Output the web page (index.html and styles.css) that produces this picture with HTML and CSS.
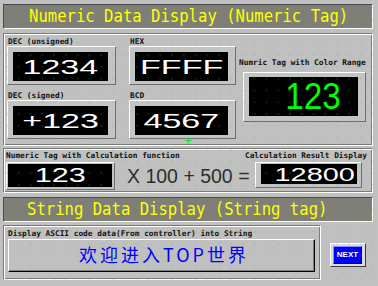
FILE: index.html
```html
<!DOCTYPE html>
<html>
<head>
<meta charset="utf-8">
<link rel="stylesheet" href="styles.css">
</head>
<body>
<div class="screen">
  <div class="title"><span class="title-text">Numeric Data Display (Numeric Tag)</span></div>
  <div class="panel numeric">
    <div class="col c1">
      <div class="lbl">DEC (unsigned)</div>
      <div class="frame"><div class="lcd"><span class="num">1234</span></div></div>
      <div class="lbl lbl2">DEC (signed)</div>
      <div class="frame"><div class="lcd"><span class="num">+123</span></div></div>
    </div>
    <div class="col c2">
      <div class="lbl">HEX</div>
      <div class="frame"><div class="lcd"><span class="num">FFFF</span></div></div>
      <div class="lbl lbl2">BCD</div>
      <div class="frame"><div class="lcd"><span class="num">4567</span></div></div>
    </div>
    <div class="col c3">
      <div class="lbl">Numric Tag with Color Range</div>
      <div class="frame big"><div class="lcd lcd-big"><span class="num green">123</span></div></div>
    </div>
  </div>
  <div class="panel calc">
    <div class="calc-labels"><span class="lbl">Numeric Tag with Calculation function</span><span class="lbl">Calculation Result Display</span></div>
    <div class="calc-row">
      <div class="frame thin"><div class="lcd"><span class="num sm">123</span></div></div>
      <div class="formula">X 100 + 500 =</div>
      <div class="frame thin result"><div class="lcd lcd-right"><span class="num sm res">12800</span></div></div>
    </div>
  </div>
  <div class="title t2"><span class="title-text">String Data Display (String tag)</span></div>
  <div class="bottom">
    <div class="panel string">
      <div class="lbl">Display ASCII code data(From controller) into String</div>
      <div class="strbox">欢迎进入TOP世界</div>
    </div>
    <div class="next"><div class="next-in">NEXT</div></div>
  </div>
  <span class="cursor">+</span>
  <div class="dots"></div>
</div>
</body>
</html>
```

FILE: styles.css
```css
* { box-sizing: border-box; }
html, body { margin: 0; padding: 0; }
body { background: #c0c0c0; width: 378px; height: 286px; overflow: hidden; }

.screen {
  position: relative;
  width: 378px;
  height: 286px;
  padding: 4px 5px 0 3px;
  display: flex;
  flex-direction: column;
}

.title {
  height: 25px;
  flex: none;
  background: #807f77;
  border: 1px solid;
  border-color: #4a4a4a #fff #fff #4a4a4a;
  padding-left: 25px;
  display: flex;
  align-items: center;
}
.title-text {
  font-family: "DejaVu Sans Mono", monospace;
  font-size: 15.6px;
  line-height: 1;
  color: #ffff00;
  display: inline-block;
  transform: scaleY(1.18);
  white-space: pre;
}
.t2 { margin-top: 4px; padding-left: 23px; }

.panel {
  flex: none;
  border: 1px solid;
  border-color: #7a7a7a #fff #fff #7a7a7a;
  box-shadow: inset 1px 1px 0 #fff, inset -1px -1px 0 #7a7a7a;
}

.lbl {
  font-family: "DejaVu Sans Mono", monospace;
  font-weight: bold;
  font-size: 7.8px;
  line-height: 9px;
  height: 9px;
  color: #111;
  white-space: pre;
}

/* numeric section */
.numeric {
  margin-top: 4px;
  height: 113px;
  display: flex;
  padding: 3px 0 0 3px;
}
.col { display: flex; flex-direction: column; }
.c1 { width: 109px; }
.c2 { width: 107px; margin-left: 13px; }
.c3 { width: 128px; margin-left: 3px; padding-top: 21px; }
.c1 .lbl, .c2 .lbl { margin-left: 1px; }
.lbl2 { margin-top: 6px; }

.frame {
  height: 39px;
  display: flex;
  border: 1px solid;
  border-color: #fff #6e6e6e #6e6e6e #fff;
  padding: 5px 7px 3px 5px;
  background: #c4c4c4;
}
.lcd {
  flex: 1;
  background: #000;
  display: flex;
  align-items: center;
  justify-content: center;
}
.num {
  font-family: "Liberation Sans", Arial, sans-serif;
  font-size: 21px;
  line-height: 1;
  color: #fff;
  display: inline-block;
  transform: scaleX(1.62);
  white-space: pre;
}

.big {
  width: 123px;
  height: 50px;
  margin-top: 5px;
  margin-left: 4px;
  padding: 4px 7px 5px 5px;
}
.lcd-big { justify-content: flex-end; padding-right: 17px; }
.green {
  color: #00ff00;
  font-size: 37px;
  transform: scaleX(0.9);
  transform-origin: right center;
}

/* calculation section */
.calc {
  margin-top: 2px;
  height: 45px;
  padding: 2px 5px 0 2px;
}
.calc-labels { display: flex; justify-content: space-between; }
.calc-row { display: flex; align-items: flex-start; margin-top: 2px; }
.thin {
  width: 109px;
  height: 28px;
  padding: 1px 2px 2px 1px;
}
.sm { font-size: 19.5px; transform: scaleX(1.57); }
.formula {
  margin-left: 12px;
  font-family: "Liberation Sans", Arial, sans-serif;
  font-size: 19.5px;
  line-height: 28px;
  color: #2e2e2e;
  white-space: pre;
}
.result {
  width: 107px;
  height: 26px;
  margin-left: auto;
  margin-right: 5px;
  padding: 1px 4px 3px 5px;
}
.lcd-right { justify-content: flex-end; padding-right: 2px; }
.lcd-right .num { transform-origin: right center; }
.res { font-size: 19px; transform: scaleX(1.52); }

/* string section */
.bottom { display: flex; align-items: flex-start; margin-top: 3px; }
.string {
  width: 318px;
  height: 55px;
  padding: 3px 5px 0 4px;
}
.strbox {
  margin-top: 1px;
  height: 33px;
  border: 1px solid;
  border-color: #fff #000 #000 #fff;
  box-shadow: inset -1px -1px 0 #808080;
  font-family: "Noto Sans CJK SC", "Liberation Sans", sans-serif;
  font-size: 18px;
  line-height: 29px;
  letter-spacing: 3px;
  padding-left: 5px;
  color: #0000ff;
  text-align: center;
}

.next {
  width: 36px;
  height: 24px;
  margin-left: 9px;
  margin-top: 18px;
  border: 1px solid;
  border-color: #fff #3a3a3a #3a3a3a #fff;
  background: #dcdcdc;
  padding: 2px 3px 2px 2px;
  display: flex;
}
.next-in {
  flex: 1;
  background: #0000ff;
  border: 1px solid;
  border-color: #8c8cff #00007a #00007a #8c8cff;
  display: flex;
  align-items: center;
  justify-content: center;
  color: #fff;
  font-family: "Liberation Sans", Arial, sans-serif;
  font-weight: bold;
  font-size: 8px;
  line-height: 1;
}

.cursor {
  position: absolute;
  left: 184px;
  top: 136px;
  font-family: "DejaVu Sans", sans-serif;
  font-size: 10px;
  line-height: 10px;
  color: #00e000;
}

.dots {
  position: absolute;
  inset: 0;
  pointer-events: none;
  background-image: radial-gradient(circle, rgba(60, 200, 60, 0.35) 0, rgba(60, 200, 60, 0.35) 0.5px, transparent 0.9px);
  background-size: 11.8px 11.8px;
  background-position: 1px 2px;
}
```
